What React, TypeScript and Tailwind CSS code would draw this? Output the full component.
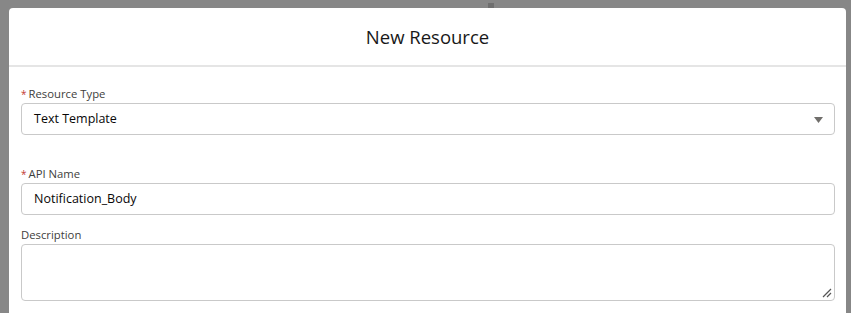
const font = { fontFamily: '"Open Sans", "Noto Sans", sans-serif' }

function Label({ text, required }: { text: string; required?: boolean }) {
  return (
    <div className="h-[18px] text-[11.3px] leading-[18px] text-[#3e3e3c] flex items-center">
      {required && <span className="text-[#c23934] text-[10px] mr-[2px]">*</span>}
      <span>{text}</span>
    </div>
  )
}

export default function App() {
  return (
    <div className="w-[851px] h-[313px] bg-[#878787] pt-2 pl-[9px] pr-[5px] overflow-hidden relative" style={font}>
      <div className="absolute left-[488px] top-[3px] w-[6px] h-[5px] bg-[#6f6f6f]" />
      <div className="bg-white rounded-t-[4px] h-full">
        <div className="h-[59px] flex items-center justify-center border-b-2 border-[#e5e5e5]">
          <h2 className="text-[18.5px] text-[#181818] font-normal">New Resource</h2>
        </div>
        <div className="pl-3 pr-[11px] pt-[18px]">
          <Label text="Resource Type" required />
          <div className="h-8 border border-[#c9c9c9] rounded-[4px] flex items-center justify-between pl-3 pr-[11px] pt-px">
            <span className="text-[12.5px] text-[#080707]">Text Template</span>
            <svg width="9" height="6" viewBox="0 0 9 6">
              <path d="M0 0 H9 L4.5 6 Z" fill="#706e6b" />
            </svg>
          </div>
          <div className="mt-[30px]">
            <Label text="API Name" required />
          </div>
          <div className="h-8 border border-[#c9c9c9] rounded-[4px] flex items-center pl-3 pt-px">
            <span className="text-[12.5px] text-[#080707]">Notification_Body</span>
          </div>
          <div className="mt-[11px]">
            <Label text="Description" />
          </div>
          <div className="h-[57px] border border-[#c9c9c9] rounded-[4px] relative">
            <svg className="absolute right-[2px] bottom-[2px]" width="10" height="10" viewBox="0 0 10 10">
              <path d="M1 9 L9 1 M5 9 L9 5" stroke="#555" strokeWidth="1.2" />
            </svg>
          </div>
        </div>
      </div>
    </div>
  )
}
